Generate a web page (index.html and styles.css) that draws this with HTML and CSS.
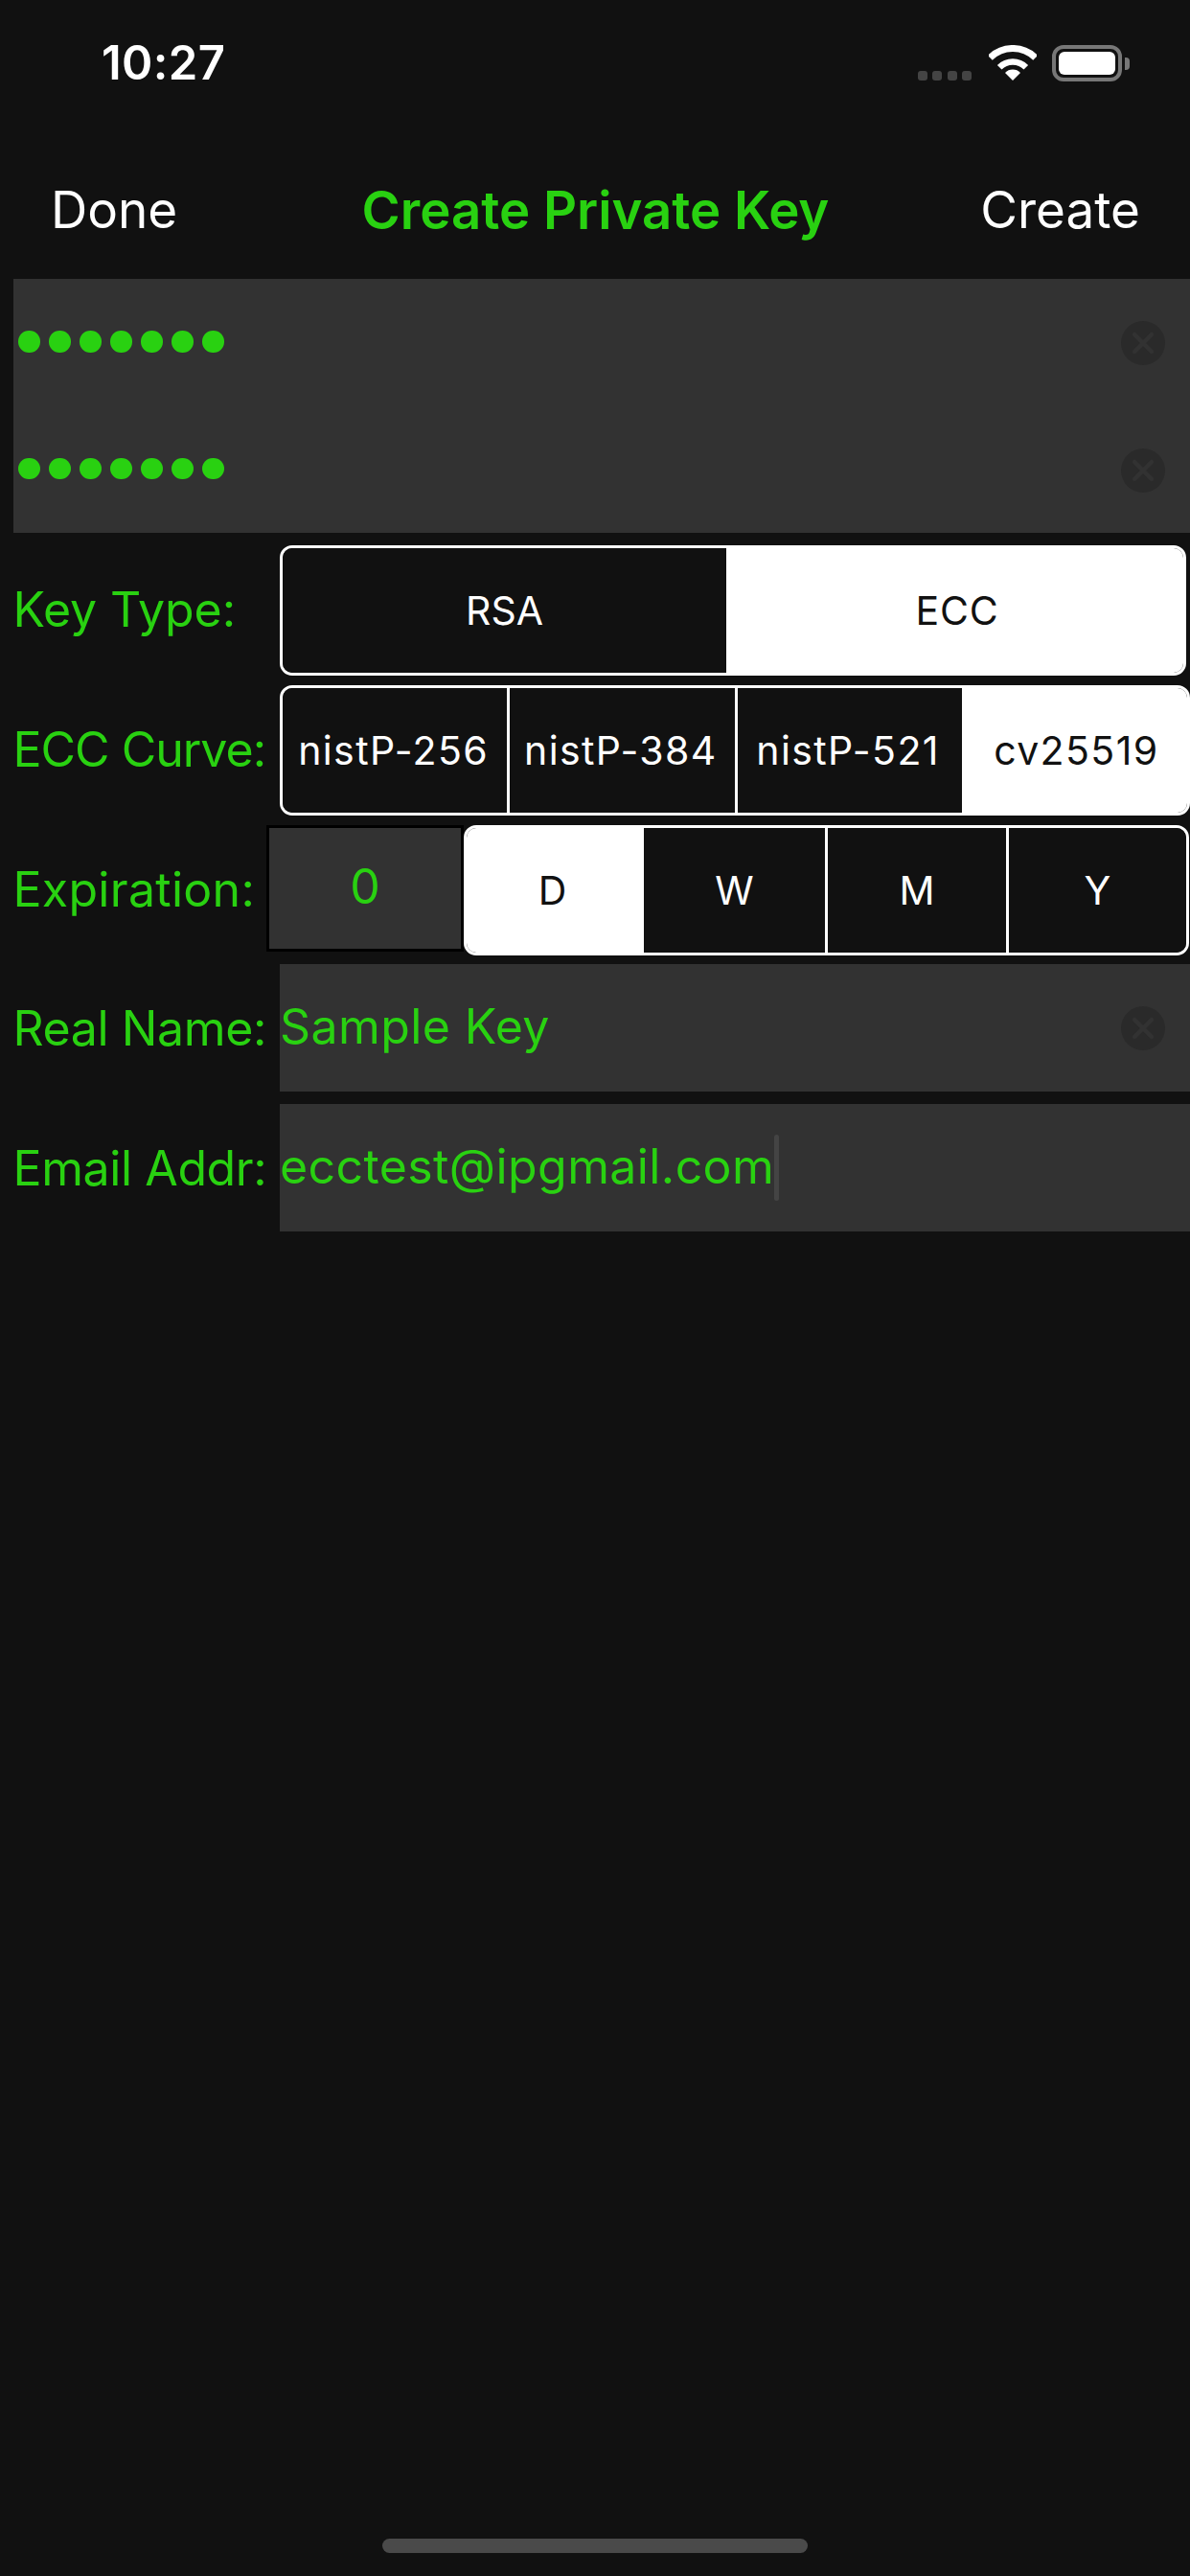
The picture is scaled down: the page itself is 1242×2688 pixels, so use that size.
FILE: index.html
```html
<!DOCTYPE html>
<html lang="en">
<head>
    <meta charset="UTF-8">
    <meta name="viewport" content="width=device-width, initial-scale=1.0">
    <title>Create Private Key</title>
    <link rel="stylesheet" href="styles.css">
</head>
<body>
    <div class="app">
        <div class="status-bar">
            <span class="time">10:27</span>
            <div class="status-icons">
                <div class="signal"><i></i><i></i><i></i><i></i></div>
                <svg class="wifi" width="50" height="37" viewBox="0 0 50 37">
                    <path d="M1.3 13.3A33.5 33.5 0 0 1 48.7 13.3" fill="none" stroke="#fff" stroke-width="7"/>
                    <path d="M11.2 23.2A19.5 19.5 0 0 1 38.8 23.2" fill="none" stroke="#fff" stroke-width="6.5"/>
                    <path d="M25 37L17 29A11 11 0 0 1 33 29Z" fill="#fff"/>
                </svg>
                <div class="battery"><div class="battery-fill"></div></div>
                <div class="battery-nub"></div>
            </div>
        </div>

        <div class="nav-bar">
            <span class="nav-done">Done</span>
            <span class="nav-title">Create Private Key</span>
            <span class="nav-create">Create</span>
        </div>

        <div class="password-panel">
            <div class="password-row">
                <div class="dots"><i></i><i></i><i></i><i></i><i></i><i></i><i></i></div>
                <svg class="clear" width="46" height="46" viewBox="0 0 46 46">
                    <circle cx="23" cy="23" r="23" fill="#2a2a2a"/>
                    <path d="M14 14L32 32M32 14L14 32" stroke="#323232" stroke-width="4.5" stroke-linecap="round"/>
                </svg>
            </div>
            <div class="password-row">
                <div class="dots"><i></i><i></i><i></i><i></i><i></i><i></i><i></i></div>
                <svg class="clear" width="46" height="46" viewBox="0 0 46 46">
                    <circle cx="23" cy="23" r="23" fill="#2a2a2a"/>
                    <path d="M14 14L32 32M32 14L14 32" stroke="#323232" stroke-width="4.5" stroke-linecap="round"/>
                </svg>
            </div>
        </div>

        <div class="form">
            <div class="row row-type">
                <span class="label label-type">Key Type:</span>
                <div class="seg seg-type">
                    <div class="seg-item">RSA</div>
                    <div class="seg-item on">ECC</div>
                </div>
            </div>
            <div class="row row-curve">
                <span class="label label-curve">ECC Curve:</span>
                <div class="seg seg-curve">
                    <div class="seg-item line">nistP-256</div>
                    <div class="seg-item line">nistP-384</div>
                    <div class="seg-item">nistP-521</div>
                    <div class="seg-item on">cv25519</div>
                </div>
            </div>
            <div class="row row-expire">
                <span class="label label-expire">Expiration:</span>
                <div class="expire-field">0</div>
                <div class="seg seg-expire">
                    <div class="seg-item on">D</div>
                    <div class="seg-item line">W</div>
                    <div class="seg-item line">M</div>
                    <div class="seg-item">Y</div>
                </div>
            </div>
            <div class="row row-name">
                <span class="label">Real Name:</span>
                <div class="text-field">
                    <span>Sample Key</span>
                    <svg class="clear" width="46" height="46" viewBox="0 0 46 46">
                        <circle cx="23" cy="23" r="23" fill="#2a2a2a"/>
                        <path d="M14 14L32 32M32 14L14 32" stroke="#323232" stroke-width="4.5" stroke-linecap="round"/>
                    </svg>
                </div>
            </div>
            <div class="row row-email">
                <span class="label">Email Addr:</span>
                <div class="text-field">
                    <span>ecctest@ipgmail.com</span><i class="caret"></i>
                </div>
            </div>
        </div>

        <div class="home-bar"></div>
    </div>
</body>
</html>
```

FILE: styles.css
```css
body {
    margin: 0;
    background-color: #111111;
    font-family: Inter, "Liberation Sans", sans-serif;
}
.app {
    width: 1242px;
    height: 2688px;
    display: flex;
    flex-direction: column;
    overflow: hidden;
    color: #ffffff;
}

/* status bar */
.status-bar {
    height: 131px;
    display: flex;
    justify-content: space-between;
    align-items: flex-start;
    padding: 0 63px 0 106px;
}
.time {
    margin-top: 37px;
    font-size: 49px;
    line-height: 58px;
    font-weight: 600;
    letter-spacing: 0.4px;
}
.status-icons {
    display: flex;
    align-items: flex-start;
    margin-top: 47px;
}
.signal {
    display: flex;
    gap: 5.5px;
    margin-top: 27px;
    margin-right: 18px;
}
.signal i {
    width: 10px;
    height: 10px;
    border-radius: 3px;
    background-color: #444444;
}
.wifi {
    margin-right: 16px;
}
.battery {
    width: 73px;
    height: 38px;
    box-sizing: border-box;
    border: 4px solid #777777;
    border-radius: 12px;
    padding: 3px;
}
.battery-fill {
    height: 100%;
    border-radius: 6px;
    background-color: #ffffff;
}
.battery-nub {
    width: 5px;
    height: 13px;
    margin: 13px 0 0 3px;
    border-radius: 0 4px 4px 0;
    background-color: #777777;
}

/* nav bar */
.nav-bar {
    height: 160px;
    display: grid;
    grid-template-columns: 1fr auto 1fr;
    align-items: center;
    padding: 15px 52px 0 53px;
    font-size: 53px;
    line-height: 60px;
    box-sizing: border-box;
}
.nav-title {
    color: #29d111;
    font-size: 54.5px;
    font-weight: 600;
}
.nav-create {
    justify-self: end;
}

/* password fields */
.password-panel {
    margin-left: 14px;
    height: 265px;
    background-color: #323232;
}
.password-row {
    height: 132.5px;
    display: flex;
    justify-content: space-between;
    align-items: center;
    padding: 0 26px 0 5px;
}
.dots {
    display: flex;
    gap: 9.5px;
    margin-bottom: 2px;
}
.dots i {
    width: 22.5px;
    height: 22.5px;
    border-radius: 50%;
    background-color: #29d111;
}
.clear {
    flex: none;
}
.password-row .clear {
    margin-top: 2px;
}

/* form rows */
.form {
    margin-top: 13px;
    display: flex;
    flex-direction: column;
}
.row {
    display: flex;
    align-items: flex-start;
}
.row-type { height: 146px; }
.row-curve { height: 146px; }
.row-expire { height: 145px; }
.row-name { height: 146px; }
.row-email { height: 132px; }
.label {
    flex: none;
    width: 278.5px;
    padding-left: 13.5px;
    font-size: 50px;
    line-height: 135px;
    color: #29d111;
    letter-spacing: -0.4px;
}
.label-type {
    letter-spacing: -0.1px;
}
.label-curve {
    letter-spacing: -1px;
}
.label-expire {
    width: 264.5px;
    letter-spacing: 0.3px;
}

/* segmented controls */
.seg {
    display: flex;
    box-sizing: border-box;
    height: 136px;
    border: 3px solid #ffffff;
    border-radius: 13px;
    overflow: hidden;
    font-size: 41px;
}
.seg-type { width: 946px; }
.seg-curve {
    width: 950px;
    letter-spacing: 1.4px;
}
.seg-curve .seg-item {
    padding-right: 3px;
}
.seg-curve .seg-item.on {
    padding-right: 0;
    padding-left: 4px;
}
.seg-expire {
    width: 757px;
    display: grid;
    grid-template-columns: 185px 192px 189px 1fr;
}
.seg-item {
    flex: 1;
    min-width: 0;
    display: flex;
    align-items: center;
    justify-content: center;
    background-color: #111111;
}
.seg-item.line {
    border-right: 3px solid #ffffff;
}
.seg-item.on {
    background-color: #ffffff;
    color: #111111;
}
.seg-type .seg-item:first-child {
    flex: none;
    width: 463px;
}
.seg-type .seg-item.on {
    padding-left: 5px;
    letter-spacing: 0.8px;
}
.seg-expire .seg-item.on {
    padding-right: 6px;
}

.expire-field {
    flex: none;
    box-sizing: border-box;
    width: 206px;
    height: 132px;
    border: 3px solid #000000;
    background-color: #323232;
    color: #29d111;
    font-size: 50px;
    line-height: 122px;
    text-align: center;
}

.text-field {
    flex: 1;
    height: 133px;
    display: flex;
    align-items: center;
    padding-right: 26px;
    background-color: #323232;
    color: #29d111;
    font-size: 50px;
    letter-spacing: 0.4px;
}
.text-field span {
    flex: none;
    margin-bottom: 3px;
}
.text-field .clear {
    margin-left: auto;
}
.caret {
    width: 5px;
    height: 69px;
    border-radius: 3px;
    background-color: #444444;
}

.home-bar {
    width: 444px;
    height: 15px;
    margin: auto auto 24px;
    border-radius: 8px;
    background-color: #4a4a4a;
}
```
